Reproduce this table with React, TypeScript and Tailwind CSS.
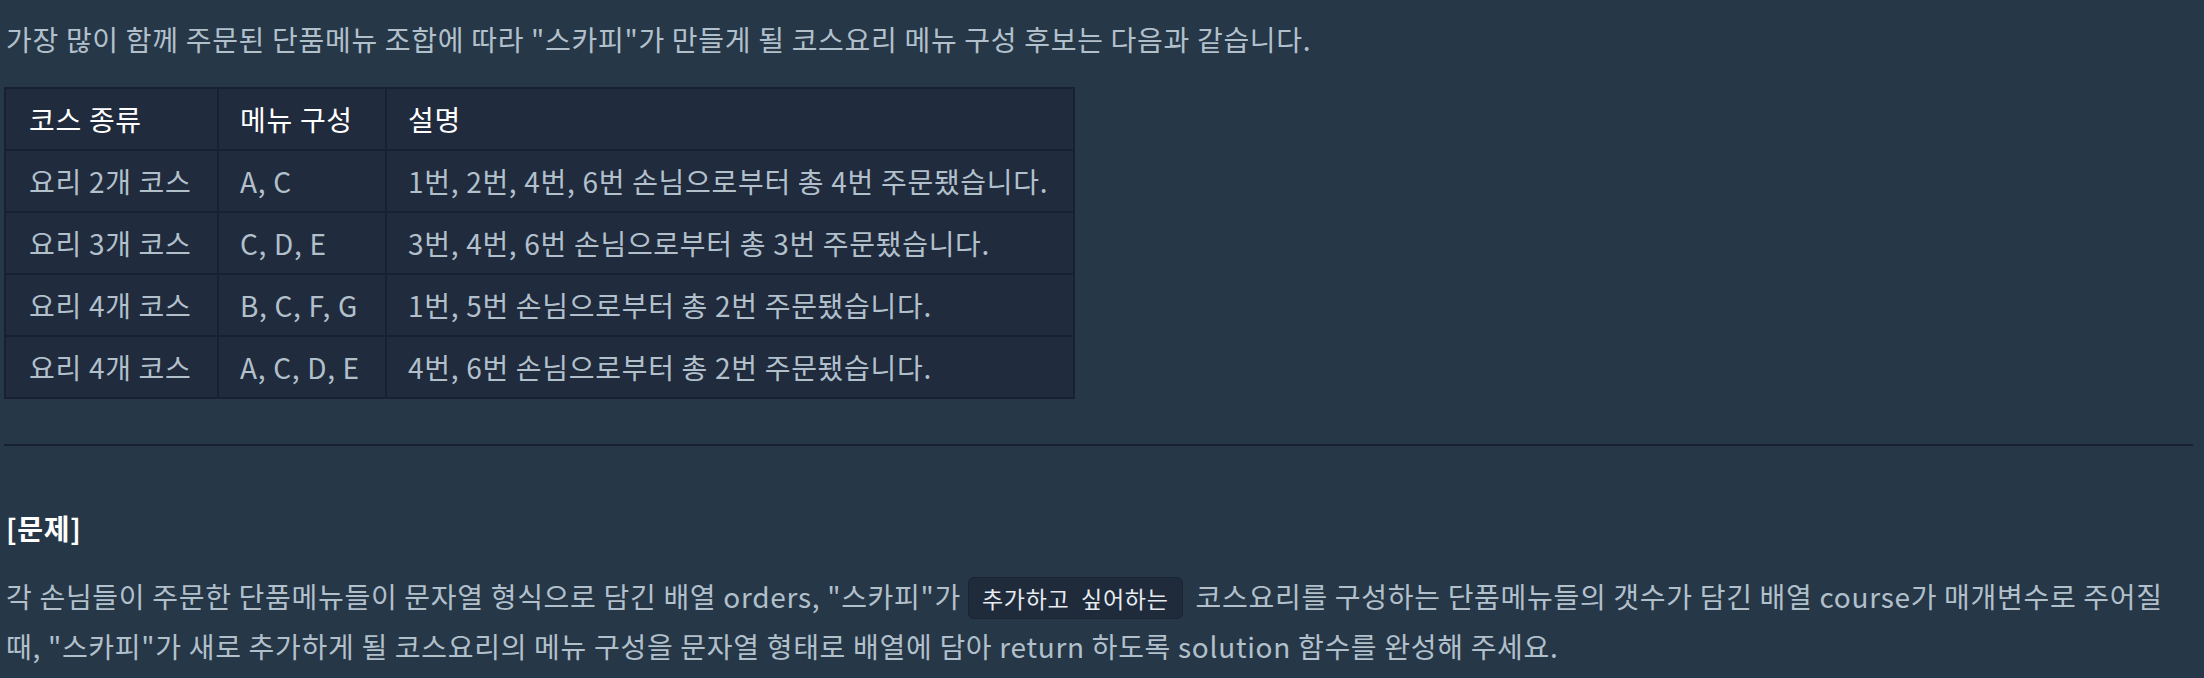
const rows = [
  { kind: "요리 2개 코스", menu: "A, C", desc: "1번, 2번, 4번, 6번 손님으로부터 총 4번 주문됐습니다." },
  { kind: "요리 3개 코스", menu: "C, D, E", desc: "3번, 4번, 6번 손님으로부터 총 3번 주문됐습니다." },
  { kind: "요리 4개 코스", menu: "B, C, F, G", desc: "1번, 5번 손님으로부터 총 2번 주문됐습니다." },
  { kind: "요리 4개 코스", menu: "A, C, D, E", desc: "4번, 6번 손님으로부터 총 2번 주문됐습니다." },
];

const font = "font-['Noto_Sans_CJK_KR','Noto_Sans',sans-serif]";

export default function App() {
  return (
    <div className={`h-[678px] bg-[#263747] pl-[4px] pr-[11px] text-[28px] tracking-[0.7px] text-[#b2c0cc] ${font}`}>
      {/* 안내 문장 */}
      <p className="pl-[2px] pt-[14px] leading-[51px]">
        가장 많이 함께 주문된 단품메뉴 조합에 따라 "스카피"가 만들게 될 코스요리 메뉴 구성 후보는 다음과 같습니다.
      </p>

      {/* 코스 후보 표 */}
      <table className="mt-[22px] border-collapse border-2 border-[#172130] bg-[#202b3d]">
        <thead>
          <tr className="text-white">
            <th className="h-[62px] w-[213px] border-2 border-[#172130] px-[23px] text-left font-normal">코스 종류</th>
            <th className="h-[62px] w-[168px] border-2 border-[#172130] px-[21px] text-left font-normal">메뉴 구성</th>
            <th className="h-[62px] w-[688px] border-2 border-[#172130] px-[21px] text-left font-normal">설명</th>
          </tr>
        </thead>
        <tbody>
          {rows.map((r, i) => (
            <tr key={i}>
              <td className="h-[62px] border-2 border-[#172130] px-[23px]">{r.kind}</td>
              <td className="h-[62px] border-2 border-[#172130] px-[21px]">{r.menu}</td>
              <td className="h-[62px] border-2 border-[#172130] px-[21px]">{r.desc}</td>
            </tr>
          ))}
        </tbody>
      </table>

      <hr className="mt-[45px] border-0 border-t-2 border-[#172130]" />

      {/* 문제 */}
      <h5 className="mt-[62px] pl-[2px] text-[28px] font-bold leading-[40px] text-white">[문제]</h5>
      <p className="mt-[23px] pl-[2px] leading-[50px]">
        각 손님들이 주문한 단품메뉴들이 문자열 형식으로 담긴 배열 orders, "스카피"가{" "}
        <code className={`mr-[6px] whitespace-pre rounded-[6px] border border-[#1a2433] bg-[#1f2a3b] px-[13px] py-[3px] text-[23px] leading-none text-[#e6ebf0] ${font}`}>
          추가하고  싶어하는
        </code>{" "}
        코스요리를 구성하는 단품메뉴들의 갯수가 담긴 배열 course가 매개변수로 주어질
        <br />
        때, "스카피"가 새로 추가하게 될 코스요리의 메뉴 구성을 문자열 형태로 배열에 담아 return 하도록 solution 함수를 완성해 주세요.
      </p>
    </div>
  );
}
